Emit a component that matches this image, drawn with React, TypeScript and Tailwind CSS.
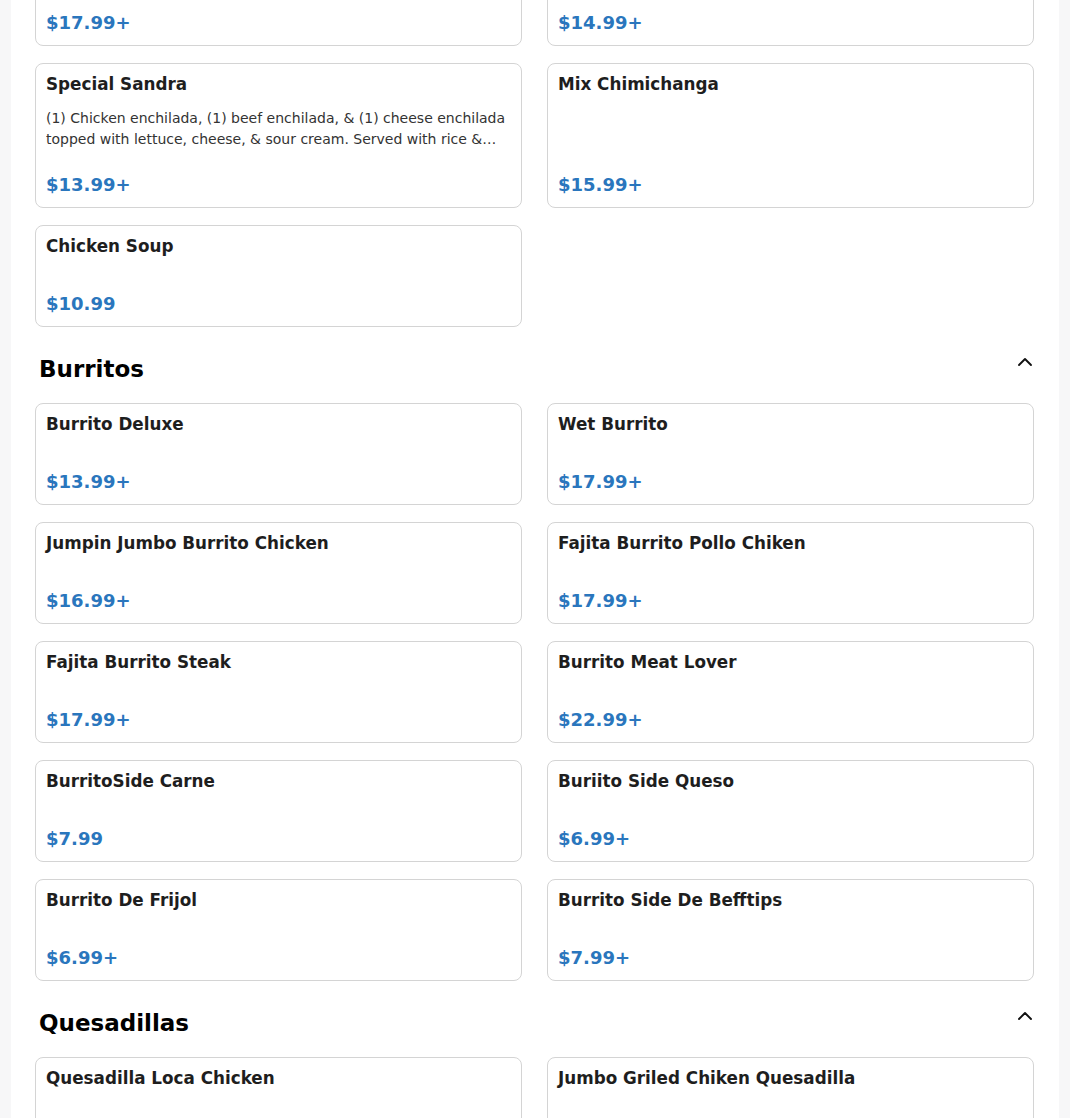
import React from 'react';

interface Item {
  name: string;
  price: string;
  description?: string;
}

interface Section {
  title?: string;
  items: Item[];
}

const sections: Section[] = [
  {
    items: [
      { name: 'Chimichanga Steak', price: '$17.99+' },
      { name: 'Chimichanga Chicken', price: '$14.99+' },
      {
        name: 'Special Sandra',
        price: '$13.99+',
        description:
          '(1) Chicken enchilada, (1) beef enchilada, & (1) cheese enchilada topped with lettuce, cheese, & sour cream. Served with rice & beans.',
      },
      { name: 'Mix Chimichanga', price: '$15.99+' },
      { name: 'Chicken Soup', price: '$10.99' },
    ],
  },
  {
    title: 'Burritos',
    items: [
      { name: 'Burrito Deluxe', price: '$13.99+' },
      { name: 'Wet Burrito', price: '$17.99+' },
      { name: 'Jumpin Jumbo Burrito Chicken', price: '$16.99+' },
      { name: 'Fajita Burrito Pollo Chiken', price: '$17.99+' },
      { name: 'Fajita Burrito Steak', price: '$17.99+' },
      { name: 'Burrito Meat Lover', price: '$22.99+' },
      { name: 'BurritoSide Carne', price: '$7.99' },
      { name: 'Buriito Side Queso', price: '$6.99+' },
      { name: 'Burrito De Frijol', price: '$6.99+' },
      { name: 'Burrito Side De Befftips', price: '$7.99+' },
    ],
  },
  {
    title: 'Quesadillas',
    items: [
      { name: 'Quesadilla Loca Chicken', price: '$13.99+' },
      { name: 'Jumbo Griled Chiken Quesadilla', price: '$15.99+' },
    ],
  },
];

function ItemCard({ item }: { item: Item }) {
  return (
    <div className="flex flex-col rounded-lg border border-[#d4d4d4] bg-white p-[10px]">
      <h3 className="text-[16.8px] font-bold leading-[20px] text-[#1e1e1e]">{item.name}</h3>
      {item.description ? (
        <p className="mt-[14px] mb-[23px] line-clamp-2 text-[14px] leading-[21px] text-[#333]">
          {item.description}
        </p>
      ) : (
        <div className="h-[36px]" />
      )}
      <div className="mt-auto text-[18px] font-bold leading-[24px] text-[#2a76bd]">{item.price}</div>
    </div>
  );
}

export default function App() {
  return (
    <div className="min-h-screen overflow-hidden bg-[#f7f7f8] font-['DejaVu_Sans',sans-serif]">
      <div className="mx-[11px] min-h-screen bg-white px-6">
        <div className="-mt-[56px] pb-10">
          {sections.map((section, i) => (
            <section key={i}>
              {section.title && (
                <div className="mt-[26px] mb-[18px] flex items-start justify-between pl-1">
                  <h2 className="text-[23px] font-bold leading-[32px] text-black">{section.title}</h2>
                  <svg width="16" height="16" viewBox="0 0 16 16" fill="none" className="mt-[1px] mr-[2px]">
                    <path d="M2 11 L8 5 L14 11" stroke="#111" strokeWidth="1.9" strokeLinecap="round" strokeLinejoin="round" />
                  </svg>
                </div>
              )}
              <div className="grid grid-cols-2 gap-x-[25px] gap-y-[17px] pr-[1px]">
                {section.items.map((item) => (
                  <ItemCard key={item.name} item={item} />
                ))}
              </div>
            </section>
          ))}
        </div>
      </div>
    </div>
  );
}
